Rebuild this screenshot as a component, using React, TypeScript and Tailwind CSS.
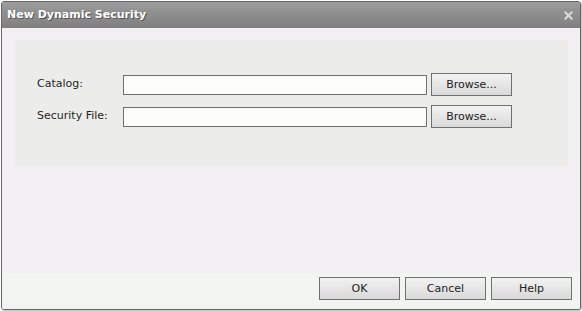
import { X } from 'lucide-react';

const font = { fontFamily: '"DejaVu Sans", Verdana, sans-serif' };

function Btn({ label, className = '' }: { label: string; className?: string }) {
  return (
    <button
      className={`h-[23px] w-[81px] shrink-0 border border-[#707070] bg-gradient-to-b from-[#f2f2f2] to-[#d9d9d9] text-[11px] leading-none text-[#222] ${className}`}
    >
      {label}
    </button>
  );
}

function Row({ label }: { label: string }) {
  return (
    <div className="flex h-[23px] items-center">
      <span className="w-[86px] text-[11px] text-[#1e1e1e]">{label}</span>
      <input className="h-[20px] w-[304px] border border-[#6f6f6f] bg-[#fdfefb] outline-none" />
      <Btn label="Browse..." className="ml-[4px]" />
    </div>
  );
}

export default function App() {
  return (
    <div className="min-h-screen bg-white p-[1px]" style={font}>
      <div className="flex h-[309px] w-[580px] flex-col overflow-hidden rounded-[3px] border border-[#666] bg-[#f2f0f3] shadow-[1px_1px_0_#c8c8c8]">
        {/* Title bar */}
        <div className="flex h-[26px] shrink-0 items-center justify-between bg-gradient-to-b from-[#9c9c9c] to-[#7f7f7f] pl-[5px] pr-[5px]">
          <span className="text-[11px] font-bold text-white [text-shadow:1px_1px_0_#555]">New Dynamic Security</span>
          <X className="h-[13px] w-[13px] text-[#dcdcdc]" strokeWidth={3.5} />
        </div>

        {/* Body */}
        <div className="flex-1 pt-[12px] pl-[13px] pr-[12px]">
          <div className="flex h-[127px] flex-col gap-[9px] bg-[#ecedeb] pl-[22px] pt-[33px]">
            <Row label="Catalog:" />
            <Row label="Security File:" />
          </div>
        </div>

        {/* Footer */}
        <div className="flex h-[36px] shrink-0 justify-end gap-[5px] bg-[#f2f4f1] pr-[8px] pt-[4px]">
          <Btn label="OK" />
          <Btn label="Cancel" />
          <Btn label="Help" />
        </div>
      </div>
    </div>
  );
}
